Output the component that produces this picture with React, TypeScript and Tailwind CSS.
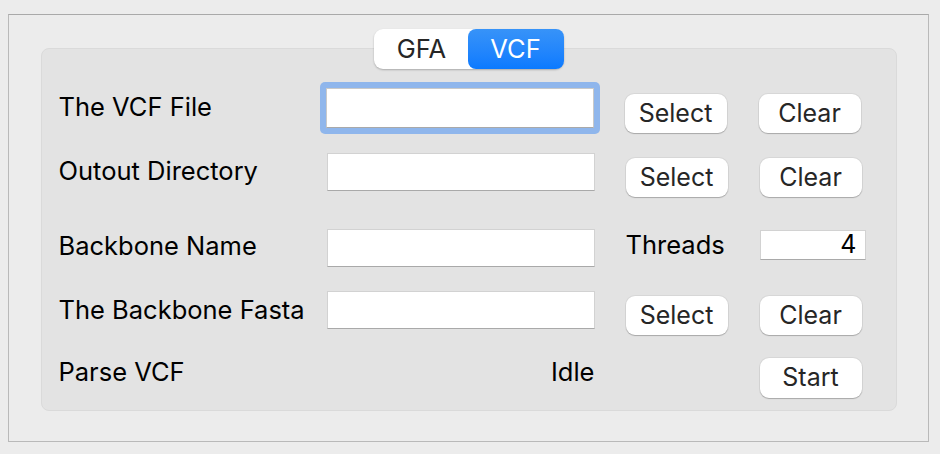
import React from "react";

const font = { fontFamily: "Inter, 'Noto Sans', sans-serif" };

function Btn({ label, className = "" }: { label: string; className?: string }) {
  return (
    <div
      className={
        "flex h-[39px] w-[102px] items-center justify-center rounded-[9px] bg-white text-[25px] text-[#262626] shadow-[0_1px_1px_rgba(0,0,0,0.22),0_0_0_1px_rgba(0,0,0,0.05)] " +
        className
      }
    >
      {label}
    </div>
  );
}

function Field({ className = "" }: { className?: string }) {
  return (
    <div
      className={
        "h-[38px] w-[268px] border border-[#d2d2d2] border-b-[#a9a9a9] bg-white " +
        className
      }
    />
  );
}

function Label({ text, className = "" }: { text: string; className?: string }) {
  return (
    <div className={"w-[268px] text-[25.5px] leading-[30px] text-black " + className}>
      {text}
    </div>
  );
}

export default function App() {
  return (
    <div className="h-[454px] w-[940px] bg-[#ececec] pl-[8px] pt-[14px]" style={font}>
      <div className="flex h-[428px] w-[921px] flex-col items-center border border-[#b9b9b9] border-t-[#a9a9a9] pt-[14px]">
        {/* segmented control */}
        <div className="relative z-10 flex h-[40px] w-[190px] rounded-[9px] bg-white shadow-[0_1px_2px_rgba(0,0,0,0.25)]">
          <div className="flex w-[94px] items-center justify-center pl-[2px] text-[25.5px] text-[#262626]">
            GFA
          </div>
          <div className="flex w-[96px] items-center justify-center rounded-[8px] bg-gradient-to-b from-[#3793f8] to-[#0a7aff] text-[25.5px] text-white">
            VCF
          </div>
        </div>
        {/* panel */}
        <div className="-mt-[21px] h-[363px] w-[856px] rounded-[8px] border border-[#dadada] bg-[#e3e3e3] pl-[17px] pt-[33px]">
          {/* row 1 */}
          <div className="flex h-[56px] items-start">
            <Label text="The VCF File" className="mt-[10px]" />
            <div className="-ml-[7px] rounded-[5px] bg-[#8fb6ec] p-[6px]">
              <div className="h-[40px] w-[268px] border border-[#c9c9c9] border-b-[#a9a9a9] bg-white" />
            </div>
            <Btn label="Select" className="ml-[25px] mt-[12px]" />
            <Btn label="Clear" className="ml-[32px] mt-[12px]" />
          </div>
          {/* row 2 */}
          <div className="flex h-[64px] items-start">
            <Label text="Outout Directory" className="mt-[18px]" />
            <Field className="mt-[15px]" />
            <Btn label="Select" className="ml-[31px] mt-[20px]" />
            <Btn label="Clear" className="ml-[32px] mt-[20px]" />
          </div>
          {/* row 3 */}
          <div className="flex h-[70px] items-start">
            <Label text="Backbone Name" className="mt-[29px]" />
            <Field className="mt-[27px]" />
            <div className="ml-[31px] mt-[28px] w-[134px] text-[25.5px] leading-[30px] text-black">
              Threads
            </div>
            <div className="mt-[28px] flex h-[30px] w-[106px] items-center justify-end border border-[#d2d2d2] border-b-[#a9a9a9] bg-white pr-[8px] text-[25px] text-black">
              4
            </div>
          </div>
          {/* row 4 */}
          <div className="flex h-[68px] items-start">
            <Label text="The Backbone Fasta" className="mt-[23px]" />
            <Field className="mt-[19px]" />
            <Btn label="Select" className="ml-[31px] mt-[24px]" />
            <Btn label="Clear" className="ml-[32px] mt-[24px]" />
          </div>
          {/* row 5 */}
          <div className="flex items-start">
            <Label text="Parse VCF" className="mt-[17px]" />
            <div className="mt-[17px] w-[268px] text-right text-[25.5px] leading-[30px] text-black">
              Idle
            </div>
            <Btn label="Start" className="ml-[165px] mt-[18px] h-[40px]" />
          </div>
        </div>
      </div>
    </div>
  );
}
